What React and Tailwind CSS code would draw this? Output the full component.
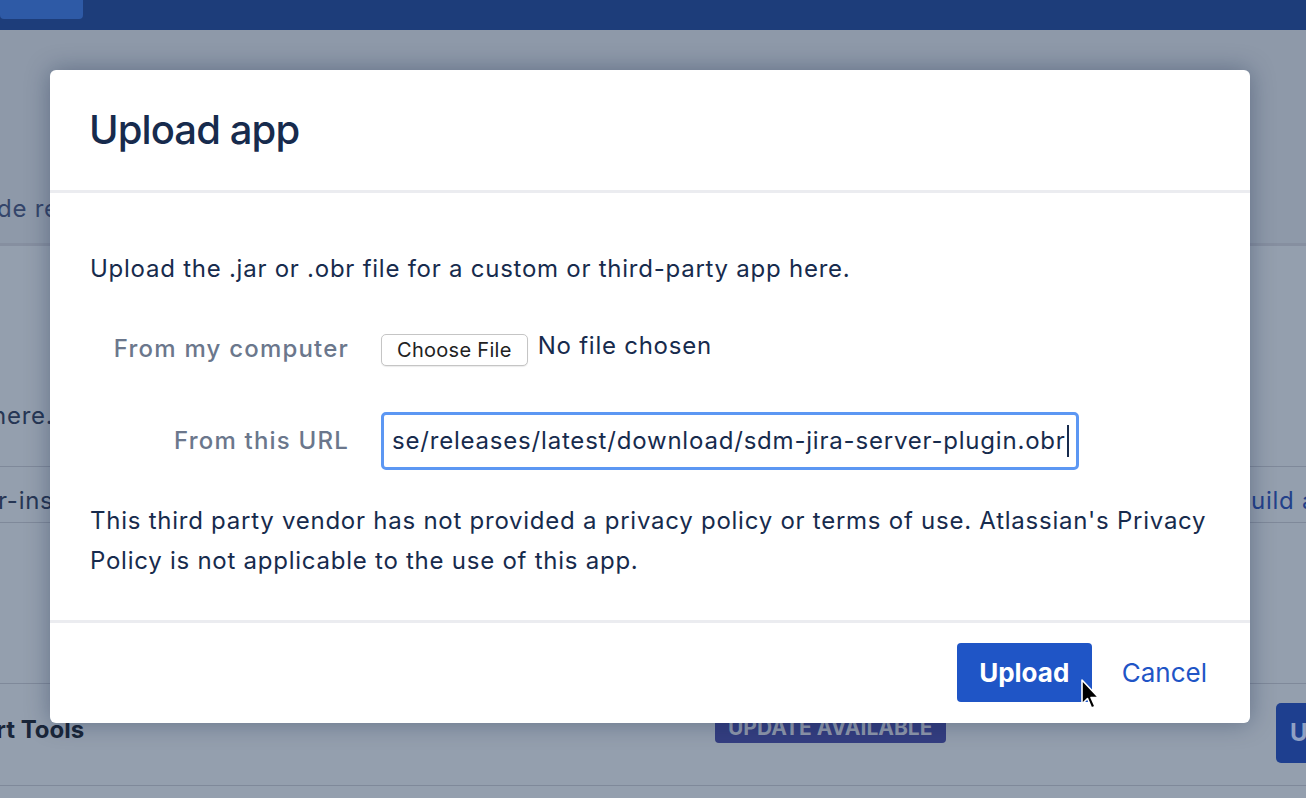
import React from "react";

function Cursor() {
  return (
    <svg width="22" height="34" viewBox="0 0 22 34" className="absolute left-[1080px] top-[678px]">
      <path d="M2 2 L2 26 L7.5 20.5 L11.5 30 L15 28.5 L11 19.5 L18.5 19.5 Z" fill="#000" stroke="#fff" strokeWidth="1.6" strokeLinejoin="round" />
    </svg>
  );
}

export default function App() {
  const font = { fontFamily: "Inter, 'Noto Sans', sans-serif" };
  return (
    <div className="relative w-[1306px] h-[798px] overflow-hidden bg-[#949fae]" style={font}>
      {/* background page (dimmed) */}
      <div className="flex flex-col">
        <div className="h-[30px] bg-[#1d3d7a] flex items-start">
          <div className="w-[83px] h-[19px] bg-[#2e5aa6] rounded-b-[4px]" />
        </div>
        <div className="h-[213px] bg-[#8e99a9] flex items-end pb-[16px]">
          <span className="-ml-[3px] text-[24px] tracking-[0.75px] text-[#34456a] whitespace-nowrap">de release notes</span>
        </div>
        <div className="h-[3px] bg-[#868fa0]" />
        <div className="h-[220px] flex items-end pb-[32px]">
          <span className="-ml-[8px] text-[24px] tracking-[0.75px] text-[#263654] whitespace-nowrap">here.</span>
        </div>
        <div className="h-px bg-[#7f899a]" />
        <div className="h-[55px] flex items-center">
          <span className="-ml-[2px] mt-[12px] text-[24px] tracking-[0.75px] text-[#263654] whitespace-nowrap">r-install</span>
          <div className="ml-auto w-[55px] overflow-hidden pt-[12px]">
            <span className="text-[24px] tracking-[0.75px] text-[#23418a] whitespace-nowrap">uild a</span>
          </div>
        </div>
        <div className="h-px bg-[#7f899a]" />
        <div className="h-[160px]" />
        <div className="h-px bg-[#7f899a]" />
        <div className="h-[101px] flex items-center">
          <div className="w-[715px] shrink-0 -mt-[10px]">
            <span className="-ml-[4px] text-[24px] font-bold text-[#1a2639] whitespace-nowrap">rt Tools</span>
          </div>
          <div className="h-[31px] px-[13px] rounded-[4px] bg-[#343e80] text-[#8f98ab] text-[21px] font-bold flex items-center -mt-[14px] uppercase">
            Update available
          </div>
          <div className="ml-auto w-[30px] h-[60px] rounded-l-[5px] bg-[#1e3f8f] flex items-center pl-[14px] mt-[-4px]">
            <span className="text-[#8fa0c4] text-[24px] font-bold">U</span>
          </div>
        </div>
        <div className="h-px bg-[#7f899a]" />
      </div>

      {/* modal */}
      <div className="absolute left-[50px] top-[70px] w-[1200px] h-[653px] bg-white rounded-[6px] shadow-[0_0_24px_rgba(9,30,66,0.35)] flex flex-col">
        <div className="h-[120px] flex items-center px-[40px]">
          <h2 className="text-[40px] font-medium text-[#172b4d] tracking-[-0.9px] -ml-[1px]">Upload app</h2>
        </div>
        <div className="h-[3px] bg-[#ebecf0]" />
        <div className="flex-1 px-[40px] pt-[56px] text-[24px] tracking-[0.75px] text-[#172b4d]">
          <p className="leading-[40px]">Upload the .jar or .obr file for a custom or third-party app here.</p>
          <div className="mt-[30px] h-[58px] flex items-center">
            <div className="w-[259px] text-right text-[#6b778c] font-medium tracking-[1.2px] pt-[2px] whitespace-nowrap">From my computer</div>
            <div className="ml-[32px] flex items-center">
              <button className="h-[32px] px-[15px] rounded-[5px] border border-[#c5c5c5] bg-white text-[20px] tracking-[0.3px] text-[#222] shadow-[0_1px_1px_rgba(0,0,0,0.08)] mt-[4px]">
                Choose File
              </button>
              <span className="ml-[10px] -mt-[4px]">No file chosen</span>
            </div>
          </div>
          <div className="mt-[35px] h-[58px] flex items-center">
            <div className="w-[259px] text-right text-[#6b778c] font-medium tracking-[1.2px] whitespace-nowrap">From this URL</div>
            <div className="ml-[32px] w-[698px] h-[58px] rounded-[5px] border-[3px] border-[#5c97f3] flex items-center pl-[8px] overflow-hidden">
              <span className="whitespace-nowrap tracking-[0.8px]">se/releases/latest/download/sdm-jira-server-plugin.obr</span>
              <span className="ml-[1px] w-[2px] h-[32px] bg-[#172b4d] shrink-0" />
            </div>
          </div>
          <p className="mt-[31px] leading-[40px]">
            This third party vendor has not provided a privacy policy or terms of use. Atlassian's Privacy Policy is not applicable to the use of this app.
          </p>
        </div>
        <div className="h-[3px] bg-[#ebecf0]" />
        <div className="h-[100px] flex items-center justify-end pr-[43px] pb-[1px]">
          <button className="h-[59px] w-[135px] rounded-[4px] bg-[#1f55c6] text-white text-[26px] font-bold">
            Upload
          </button>
          <button className="ml-[30px] text-[26px] text-[#1f55c6]">Cancel</button>
        </div>
      </div>
      <Cursor />
    </div>
  );
}
